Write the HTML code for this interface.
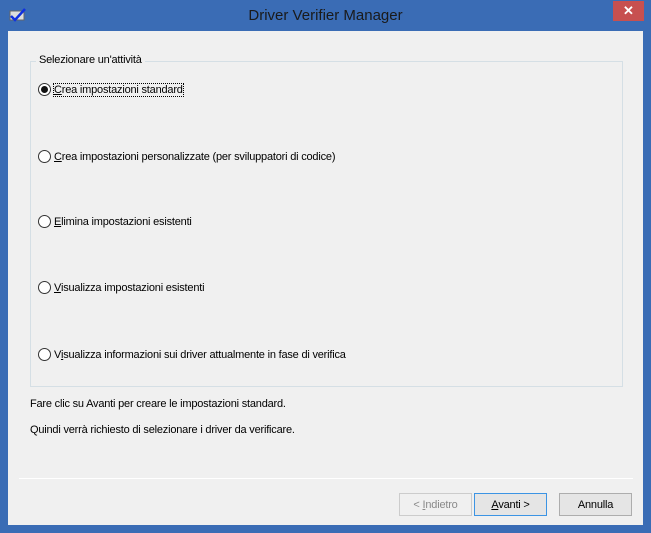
<!DOCTYPE html>
<html><head><style>
*{margin:0;padding:0;box-sizing:border-box}
body{width:651px;height:533px;background:#3a6cb5;position:relative;overflow:hidden;font-family:"Liberation Sans",sans-serif;font-size:11px;letter-spacing:-0.2px;color:#000}
.title{position:absolute;left:0;top:0;width:651px;height:31px;text-align:center;line-height:31px;font-size:15px;letter-spacing:0;color:#1a1a1a}
.close{position:absolute;left:613px;top:1px;width:31px;height:20px;background:#c75050;color:#fff;text-align:center;line-height:20px;font-size:13px;font-weight:bold;letter-spacing:0}
.client{position:absolute;left:8px;top:31px;width:635px;height:494px;background:#f0f0f0}
.grp{position:absolute;left:30px;top:61px;width:593px;height:326px;border:1px solid #d5dfe5}
.glabel{position:absolute;left:36px;top:54px;background:#f0f0f0;padding:0 3px}
.r{position:absolute;left:38px}
.r i{position:absolute;left:0;top:0;width:13px;height:13px;border:1px solid #333;border-radius:50%;background:#fff}
.r i.on:after{content:"";position:absolute;left:2px;top:2px;width:7px;height:7px;border-radius:50%;background:#111}
.r span{position:absolute;left:16px;top:1px;white-space:nowrap}
.t{position:absolute;left:30px}
.sep{position:absolute;left:19px;top:478px;width:614px;height:1px;background:#a0a0a0;border-bottom:1px solid #fff}
.b{position:absolute;top:493px;height:23px;border:1px solid #adadad;background:#e5e5e5;text-align:center;line-height:22px}
</style></head><body>
<div class="title">Driver Verifier Manager</div>
<svg style="position:absolute;left:9px;top:8px" width="18" height="14"><rect x="1" y="3" width="14" height="9" fill="#ddd" stroke="#666"/><path d="M2 8 L6 12 L16 1" stroke="#1030e0" stroke-width="2.5" fill="none"/></svg>
<div class="close">✕</div>
<div class="client"></div>
<div class="grp"></div>
<div class="glabel">Selezionare un'attività</div>
<div class="r" style="top:83px"><i class="on"></i><span style="outline:1px dotted #000"><u>C</u>rea impostazioni standard</span></div>
<div class="r" style="top:150px"><i></i><span><u>C</u>rea impostazioni personalizzate (per sviluppatori di codice)</span></div>
<div class="r" style="top:215px"><i></i><span><u>E</u>limina impostazioni esistenti</span></div>
<div class="r" style="top:281px"><i></i><span><u>V</u>isualizza impostazioni esistenti</span></div>
<div class="r" style="top:348px"><i></i><span>V<u>i</u>sualizza informazioni sui driver attualmente in fase di verifica</span></div>
<div class="t" style="top:398px">Fare clic su Avanti per creare le impostazioni standard.</div>
<div class="t" style="top:424px">Quindi verrà richiesto di selezionare i driver da verificare.</div>
<div class="sep"></div>
<div class="b" style="left:399px;width:73px;color:#8a8a8a;border-color:#ccc;background:#f0f0f0">&lt; <u>I</u>ndietro</div>
<div class="b" style="left:474px;width:73px;border-color:#3c94e4"><u>A</u>vanti &gt;</div>
<div class="b" style="left:559px;width:73px">Annulla</div>
</body></html>
